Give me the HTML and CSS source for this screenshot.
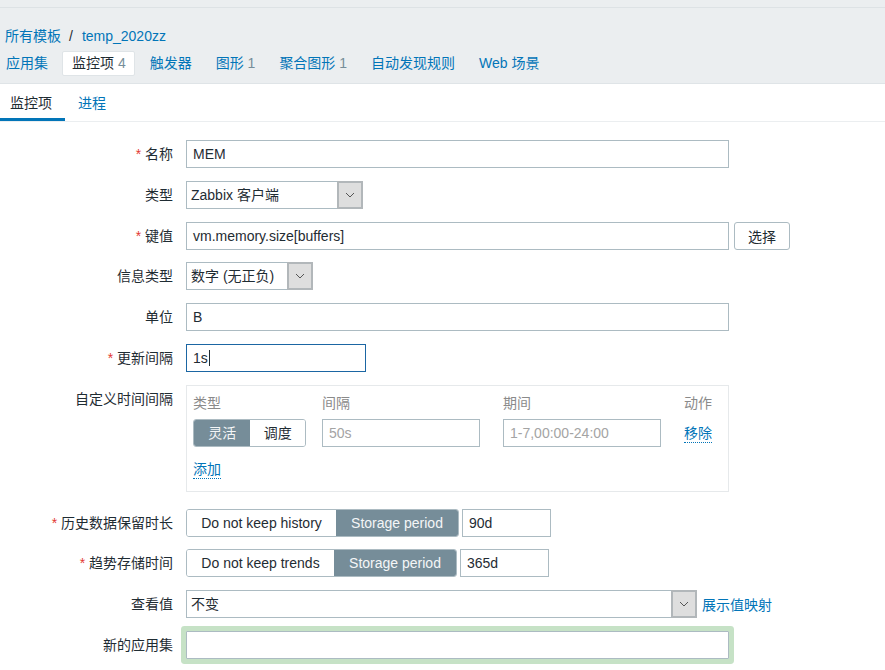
FILE: index.html
```html
<!DOCTYPE html>
<html lang="zh-CN">
<head>
<meta charset="utf-8">
<title>监控项</title>
<link rel="stylesheet" href="styles.css">
</head>
<body>
<div class="header">
  <div class="topbar"></div>
  <div class="breadcrumb"><a class="link">所有模板</a><span class="sep">/</span><a class="link">temp_2020zz</a></div>
  <ul class="nav">
    <li><a class="link">应用集</a></li>
    <li class="active"><a class="link">监控项</a> <span class="count">4</span></li>
    <li><a class="link">触发器</a></li>
    <li><a class="link">图形</a> <span class="count">1</span></li>
    <li><a class="link">聚合图形</a> <span class="count">1</span></li>
    <li><a class="link">自动发现规则</a></li>
    <li><a class="link">Web 场景</a></li>
  </ul>
</div>
<div class="subtabs">
  <div class="subtab current">监控项</div>
  <div class="subtab"><a class="link">进程</a></div>
</div>
<div class="form">
  <div class="row">
    <label class="lbl"><span class="req">*</span> 名称</label>
    <div class="field"><div class="input w-wide">MEM</div></div>
  </div>
  <div class="row">
    <label class="lbl">类型</label>
    <div class="field"><div class="select w-type"><span class="sel-text">Zabbix 客户端</span><span class="sel-btn"><svg width="10" height="6" viewBox="0 0 10 6"><path d="M1 1l4 4 4-4" fill="none" stroke="#555" stroke-width="1"/></svg></span></div></div>
  </div>
  <div class="row">
    <label class="lbl"><span class="req">*</span> 键值</label>
    <div class="field"><div class="input w-wide">vm.memory.size[buffers]</div><button class="btn">选择</button></div>
  </div>
  <div class="row">
    <label class="lbl">信息类型</label>
    <div class="field"><div class="select w-info"><span class="sel-text">数字 (无正负)</span><span class="sel-btn"><svg width="10" height="6" viewBox="0 0 10 6"><path d="M1 1l4 4 4-4" fill="none" stroke="#555" stroke-width="1"/></svg></span></div></div>
  </div>
  <div class="row">
    <label class="lbl">单位</label>
    <div class="field"><div class="input w-wide">B</div></div>
  </div>
  <div class="row">
    <label class="lbl"><span class="req">*</span> 更新间隔</label>
    <div class="field"><div class="input focus w-delay">1s<span class="caret"></span></div></div>
  </div>
  <div class="row row-custom">
    <label class="lbl">自定义时间间隔</label>
    <div class="field">
      <div class="intervals">
        <div class="int-grid">
          <div class="th">类型</div>
          <div class="th">间隔</div>
          <div class="th">期间</div>
          <div class="th">动作</div>
          <div class="seg small">
            <span class="seg-item on">灵活</span><span class="seg-item">调度</span>
          </div>
          <div class="input ph w-int">50s</div>
          <div class="input ph w-int">1-7,00:00-24:00</div>
          <div class="act"><a class="link dotted">移除</a></div>
        </div>
        <div class="add"><a class="link dotted">添加</a></div>
      </div>
    </div>
  </div>
  <div class="row">
    <label class="lbl"><span class="req">*</span> 历史数据保留时长</label>
    <div class="field">
      <div class="seg"><span class="seg-item w150">Do not keep history</span><span class="seg-item on w122">Storage period</span></div>
      <div class="input w-days">90d</div>
    </div>
  </div>
  <div class="row">
    <label class="lbl"><span class="req">*</span> 趋势存储时间</label>
    <div class="field">
      <div class="seg"><span class="seg-item w148">Do not keep trends</span><span class="seg-item on w122">Storage period</span></div>
      <div class="input w-days">365d</div>
    </div>
  </div>
  <div class="row">
    <label class="lbl">查看值</label>
    <div class="field"><div class="select w-view"><span class="sel-text">不变</span><span class="sel-btn"><svg width="10" height="6" viewBox="0 0 10 6"><path d="M1 1l4 4 4-4" fill="none" stroke="#555" stroke-width="1"/></svg></span></div><a class="link map">展示值映射</a></div>
  </div>
  <div class="row">
    <label class="lbl">新的应用集</label>
    <div class="field"><div class="input w-wide glow"></div></div>
  </div>
</div>
</body>
</html>
```

FILE: styles.css
```css
* { box-sizing: border-box; }
html, body { margin: 0; padding: 0; background: #fff; }
body {
  font-family: "Liberation Sans", "Noto Sans CJK SC", sans-serif;
  font-size: 14px;
  color: #1f2c33;
  width: 885px;
  height: 670px;
  overflow: hidden;
}
.link { color: #0275b8; text-decoration: none; cursor: pointer; }
.dotted { border-bottom: 1px dotted #0275b8; padding-bottom: 1px; }

.header {
  background: #ebeef0;
  border-bottom: 1px solid #dfe4e7;
  height: 84px;
}
.topbar { height: 8px; border-bottom: 1px solid #dde2e5; }
.breadcrumb {
  margin-top: 18px;
  padding-left: 5px;
  line-height: 20px;
  height: 20px;
}
.sep { margin: 0 9px 0 8px; color: #1f2c33; }
.nav {
  list-style: none;
  margin: 5px 0 0 -4px;
  padding: 0;
  display: flex;
  gap: 5px;
}
.nav li {
  height: 25px;
  line-height: 23px;
  padding: 0 8px 0 9px;
  border: 1px solid transparent;
  border-radius: 2px;
  white-space: nowrap;
}
.nav li.active { background: #fff; border-color: #dfe4e7; color: #1f2c33; }
.nav li.active .link { color: #1f2c33; }
.count { color: #768d99; }

.subtabs {
  display: flex;
  gap: 3px;
  border-bottom: 1px solid #ebeef0;
  height: 38px;
}
.subtab {
  padding: 4px 13px 0 10px;
  line-height: 30px;
  height: 37px;
  border-bottom: 3px solid transparent;
}
.subtab.current { border-bottom-color: #0275b8; color: #1f2c33; }

.form {
  padding-top: 18px;
  display: flex;
  flex-direction: column;
  gap: 12.8px;
}
.row {
  display: grid;
  grid-template-columns: 173px 1fr;
  column-gap: 13px;
  align-items: start;
}
.row-custom { margin-bottom: 4px; }
.lbl {
  text-align: right;
  line-height: 28px;
  white-space: nowrap;
}
.req { color: #e33734; }
.field { display: flex; align-items: center; gap: 5px; }

.input {
  height: 28px;
  line-height: 26px;
  border: 1px solid #acbbc2;
  background: #fff;
  padding: 0 6px;
  white-space: nowrap;
  overflow: hidden;
  flex: none;
}
.input.focus { border-color: #1b66a3; }
.input.ph { color: #a4a4a4; }
.caret { display: inline-block; width: 1px; height: 16px; background: #1f2c33; vertical-align: -3px; margin-left: 1px; }
.glow { box-shadow: 0 0 0 5px #c6e2c6; border-radius: 1px; }

.w-wide { width: 543px; }
.w-delay { width: 180px; }
.w-int { width: 158px; }
.w-days { width: 89px; }
.field .w-days { margin-left: -2px; }

.select {
  height: 28px;
  border: 1px solid #acbbc2;
  display: flex;
  align-items: stretch;
  flex: none;
  background: #fff;
}
.sel-text { flex: 1; padding-left: 4px; line-height: 26px; white-space: nowrap; }
.sel-btn {
  width: 26px;
  margin: -1px -1px -1px 0;
  background: #dedede;
  border: 2px solid #b2b7ba;
  display: flex;
  align-items: center;
  justify-content: center;
}
.w-type { width: 177px; }
.w-info { width: 127px; }
.w-view { width: 511px; }

.btn {
  height: 28px;
  width: 56px;
  border: 1px solid #acbbc2;
  border-radius: 3px;
  background: #fff;
  font: inherit;
  color: #1f2c33;
  padding: 0;
}

.intervals {
  width: 543px;
  height: 107px;
  border: 1px solid #e6e9eb;
  padding: 8px 6px 0 6px;
}
.int-grid {
  display: grid;
  grid-template-columns: 129px 181px 181px auto;
  grid-template-rows: 18px 28px;
  row-gap: 7px;
  align-items: center;
}
.th { color: #8a8a8a; line-height: 18px; }
.act { line-height: 20px; }
.add { margin-top: 12px; line-height: 20px; }

.seg {
  display: flex;
  height: 28px;
  border: 1px solid #acbbc2;
  border-radius: 3px;
  overflow: hidden;
  flex: none;
}
.seg-item {
  padding: 0;
  text-align: center;
  line-height: 26px;
  white-space: nowrap;
  background: #fff;
  color: #1f2c33;
}
.seg-item.on { background: #768d99; color: #f4f6f7; }
.w150 { width: 149px; }
.w148 { width: 147px; }
.w122 { width: 122px; }
.seg.small { width: 113px; }
.seg.small .seg-item { width: 57px; }
.seg.small .seg-item + .seg-item { width: 55px; }
```
